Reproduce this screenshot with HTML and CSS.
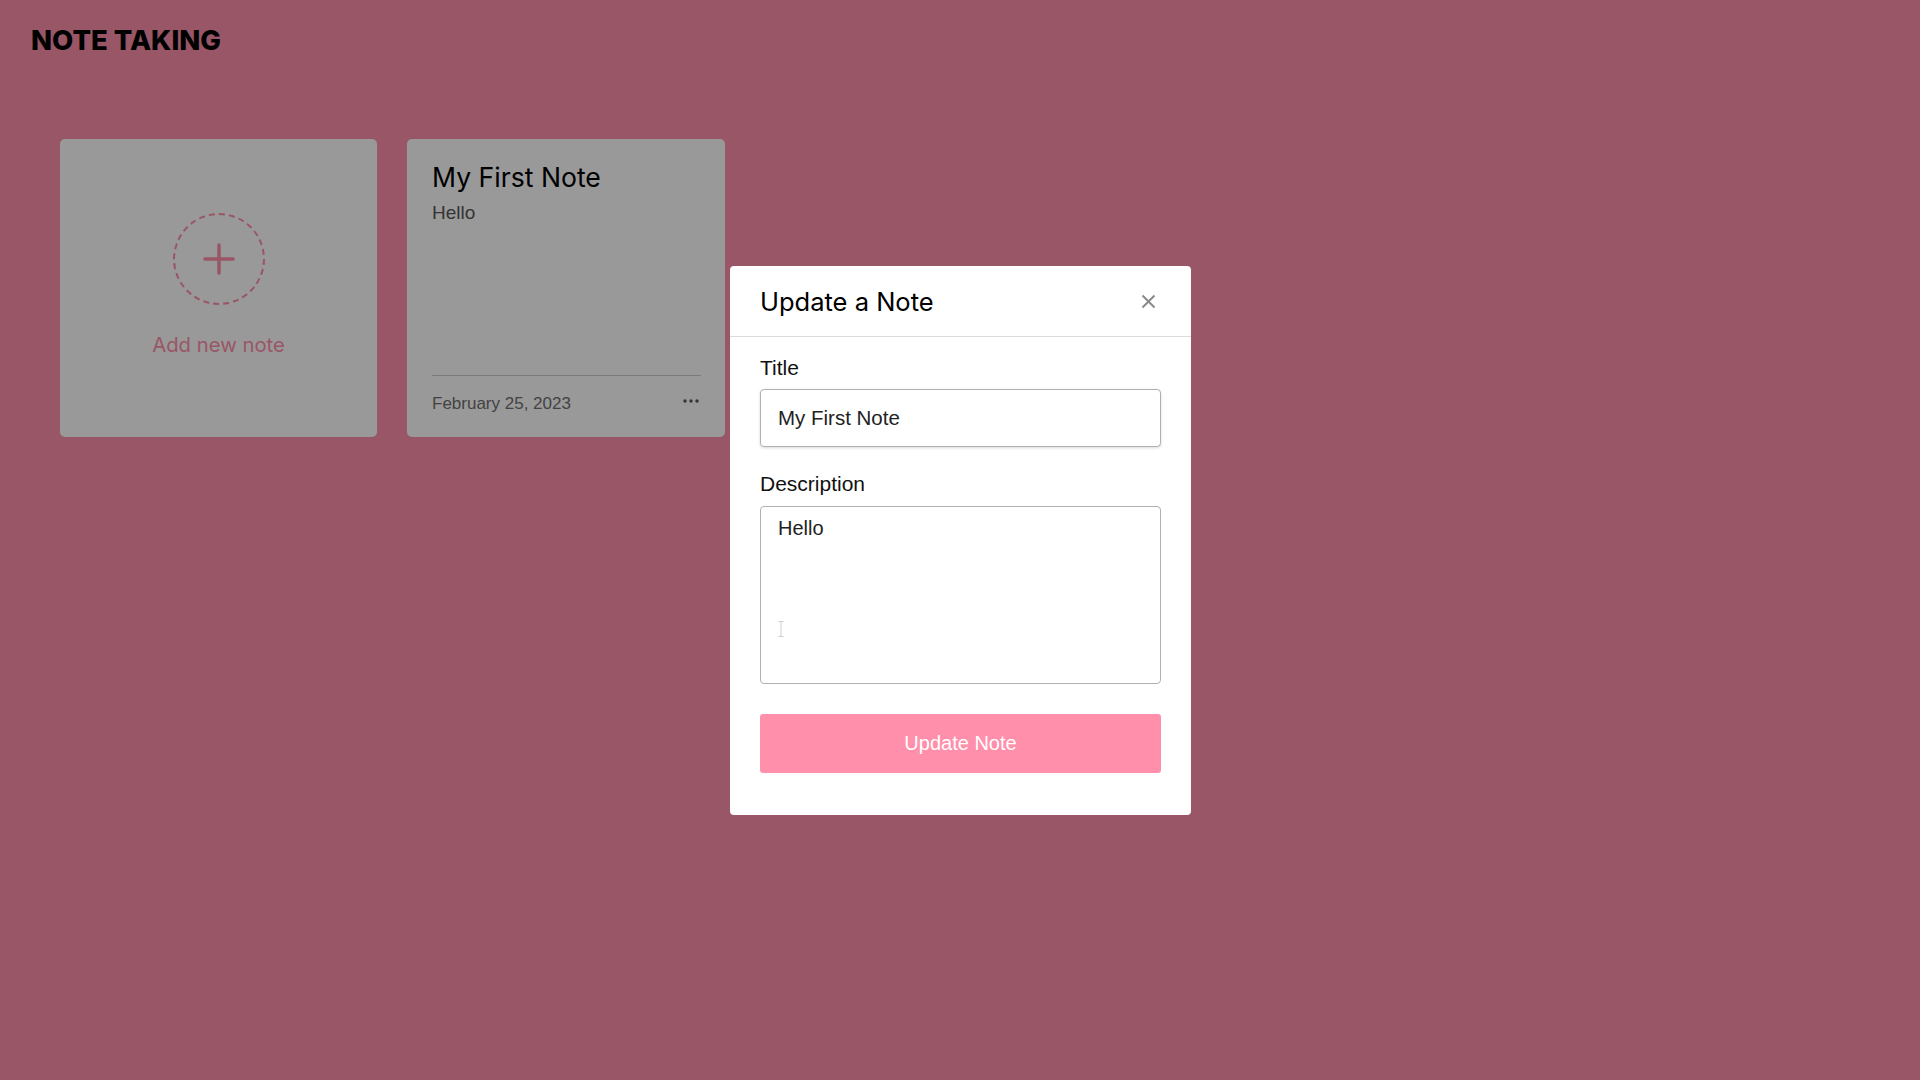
FILE: index.html
```html
<!DOCTYPE html>
<html lang="en">
<head>
<meta charset="utf-8">
<title>Note Taking</title>
<link rel="stylesheet" href="styles.css">
</head>
<body>
<header class="app-header">
  <h1 class="app-title">NOTE TAKING</h1>
</header>
<main class="notes">
  <div class="card add-card">
    <div class="add-circle">
      <svg class="plus-icon" width="32" height="32" viewBox="0 0 32 32">
        <path d="M16 2v28M2 16h28" stroke="currentColor" stroke-width="3.5" stroke-linecap="round" fill="none"/>
      </svg>
    </div>
    <p class="add-label">Add new note</p>
  </div>
  <div class="card note-card">
    <h2 class="note-title">My First Note</h2>
    <p class="note-desc">Hello</p>
    <div class="note-footer">
      <span class="note-date">February 25, 2023</span>
      <svg class="more-icon" width="16" height="4" viewBox="0 0 16 4">
        <circle cx="2" cy="2" r="1.7" fill="currentColor"/>
        <circle cx="8" cy="2" r="1.7" fill="currentColor"/>
        <circle cx="14" cy="2" r="1.7" fill="currentColor"/>
      </svg>
    </div>
  </div>
</main>
<div class="overlay">
  <div class="modal">
    <div class="modal-header">
      <h3 class="modal-title">Update a Note</h3>
      <button class="close-btn" aria-label="Close">
        <svg width="15" height="15" viewBox="0 0 15 15">
          <path d="M1.5 1.5l12 12M13.5 1.5l-12 12" stroke="currentColor" stroke-width="2" fill="none"/>
        </svg>
      </button>
    </div>
    <form class="modal-body">
      <label class="field-label" for="title">Title</label>
      <input class="field-input" id="title" type="text" value="My First Note">
      <label class="field-label desc-label" for="desc">Description</label>
      <div class="textarea-wrap">
        <textarea class="field-textarea" id="desc">Hello</textarea>
        <svg class="ibeam" width="6" height="16" viewBox="0 0 6 16">
          <path d="M0.5 0.5h5M3 0.5v15M0.5 15.5h5" stroke="#cfcfcf" stroke-width="1" fill="none"/>
        </svg>
      </div>
      <button class="submit-btn" type="button">Update Note</button>
    </form>
  </div>
</div>
</body>
</html>
```

FILE: styles.css
```css
* { box-sizing: border-box; }

body {
  margin: 0;
  min-height: 100vh;
  background: #ff8fab;
  font-family: "Liberation Sans", Arial, sans-serif;
}

.app-header {
  padding: 23px 31px 0;
  height: 139px;
}

.app-title {
  margin: 0;
  font-family: Inter, "Noto Sans", sans-serif;
  font-weight: 800;
  font-size: 27.5px;
  line-height: 34px;
  letter-spacing: 0;
  color: #000;
}

.notes {
  display: flex;
  gap: 30px;
  padding-left: 60px;
}

.card {
  width: 317px;
  height: 298px;
  background: #fff;
  border-radius: 5px;
}

.add-card {
  display: flex;
  flex-direction: column;
  align-items: center;
  padding-top: 74px;
  color: #ff8fab;
}

.add-circle {
  width: 92px;
  height: 92px;
  border: 2px dashed #ff8fab;
  border-radius: 50%;
  display: flex;
  align-items: center;
  justify-content: center;
}

.add-label {
  margin: 28px 0 0;
  font-family: Inter, "Noto Sans", sans-serif;
  font-size: 20.3px;
  line-height: 24px;
  font-weight: 400;
  color: #ff8fab;
}

.note-card {
  width: 318px;
  display: flex;
  flex-direction: column;
  padding: 21px 24px 0 25px;
}

.note-title {
  margin: 0;
  font-family: Inter, "Noto Sans", sans-serif;
  font-weight: 400;
  font-size: 26.6px;
  line-height: 34px;
  color: #000;
}

.note-desc {
  margin: 8px 0 0;
  font-size: 19px;
  line-height: 22px;
  color: #575757;
}

.note-footer {
  margin-top: auto;
  height: 62px;
  border-top: 1px solid #ccc;
  display: flex;
  align-items: center;
  justify-content: space-between;
  padding-bottom: 5px;
}

.note-date {
  font-size: 17px;
  color: #707070;
}

.more-icon {
  color: #575757;
  margin-right: 2px;
  margin-bottom: 7px;
}

.overlay {
  position: fixed;
  inset: 0;
  background: rgba(0, 0, 0, 0.4);
  display: flex;
  align-items: center;
  justify-content: center;
}

.modal {
  width: 461px;
  background: #fff;
  border-radius: 4px;
  margin-left: 1px;
  margin-top: 1px;
}

.modal-header {
  height: 71px;
  border-bottom: 1px solid #dcdcdc;
  display: flex;
  align-items: center;
  justify-content: space-between;
  padding: 0 35px 0 30px;
}

.modal-title {
  margin: 0;
  font-family: Inter, "Noto Sans", sans-serif;
  font-weight: 400;
  font-size: 25.5px;
  color: #000;
}

.close-btn {
  border: 0;
  background: none;
  padding: 0;
  width: 15px;
  height: 15px;
  color: #8a8a8a;
  display: flex;
}

.modal-body {
  display: flex;
  flex-direction: column;
  padding: 19px 30px 42px;
  margin: 0;
}

.field-label {
  font-size: 21px;
  line-height: 24px;
  color: #111;
}

.field-input {
  margin-top: 9px;
  height: 58px;
  width: 100%;
  border: 1px solid #b0b0b0;
  border-radius: 4px;
  box-shadow: 0 1px 3px rgba(0, 0, 0, 0.15);
  padding: 0 17px;
  font-family: "Liberation Sans", Arial, sans-serif;
  font-size: 20.5px;
  color: #222;
}

.desc-label {
  margin-top: 25px;
}

.textarea-wrap {
  position: relative;
  margin-top: 10px;
}

.field-textarea {
  display: block;
  width: 100%;
  height: 178px;
  border: 1px solid #b0b0b0;
  border-radius: 4px;
  padding: 9px 17px 6px;
  resize: none;
  font-family: "Liberation Sans", Arial, sans-serif;
  font-size: 20px;
  line-height: 24px;
  color: #222;
}

.ibeam {
  position: absolute;
  left: 18px;
  top: 115px;
}

.submit-btn {
  margin-top: 30px;
  height: 59px;
  width: 100%;
  border: 0;
  border-radius: 3px;
  background: #ff8fab;
  color: #fff;
  font-family: "Liberation Sans", Arial, sans-serif;
  font-size: 20px;
}
```
